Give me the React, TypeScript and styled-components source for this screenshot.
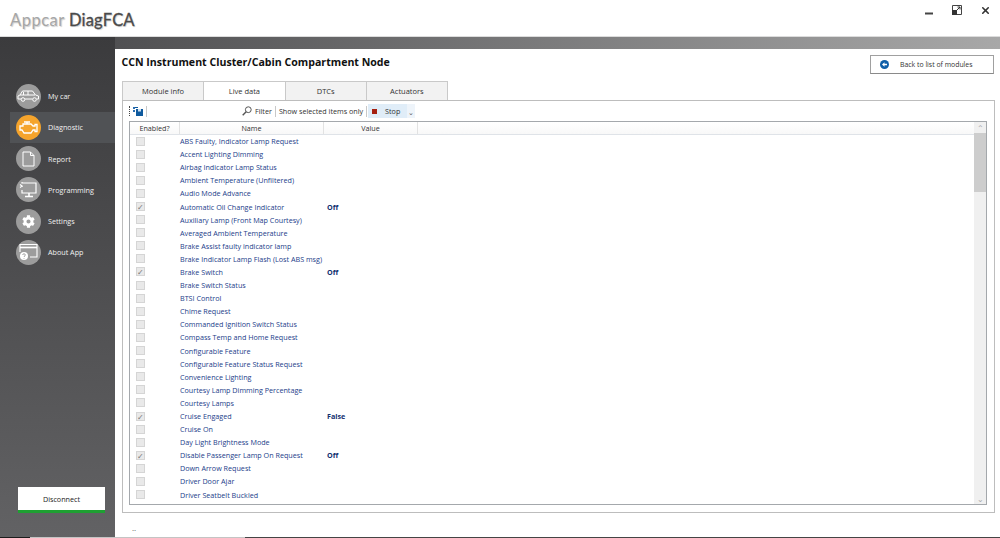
import { createGlobalStyle, styled } from 'styled-components';
import { X } from 'lucide-react';
import { FaCog } from 'react-icons/fa';

const GlobalStyle = createGlobalStyle`
	html, body {
		margin: 0;
		padding: 0;
		background: #fff;
	}
	body {
		font-family: "Open Sans", "Noto Sans", sans-serif;
		width: 1000px;
		height: 538px;
		overflow: hidden;
	}
	* {
		box-sizing: border-box;
	}
`;

type Signal = { name: string; value?: string };

const signals: Signal[] = [
	{ name: 'ABS Faulty, Indicator Lamp Request' },
	{ name: 'Accent Lighting Dimming' },
	{ name: 'Airbag Indicator Lamp Status' },
	{ name: 'Ambient Temperature (Unfiltered)' },
	{ name: 'Audio Mode Advance' },
	{ name: 'Automatic Oil Change Indicator', value: 'Off' },
	{ name: 'Auxiliary Lamp (Front Map Courtesy)' },
	{ name: 'Averaged Ambient Temperature' },
	{ name: 'Brake Assist faulty indicator lamp' },
	{ name: 'Brake Indicator Lamp Flash (Lost ABS msg)' },
	{ name: 'Brake Switch', value: 'Off' },
	{ name: 'Brake Switch Status' },
	{ name: 'BTSI Control' },
	{ name: 'Chime Request' },
	{ name: 'Commanded Ignition Switch Status' },
	{ name: 'Compass Temp and Home Request' },
	{ name: 'Configurable Feature' },
	{ name: 'Configurable Feature Status Request' },
	{ name: 'Convenience Lighting' },
	{ name: 'Courtesy Lamp Dimming Percentage' },
	{ name: 'Courtesy Lamps' },
	{ name: 'Cruise Engaged', value: 'False' },
	{ name: 'Cruise On' },
	{ name: 'Day Light Brightness Mode' },
	{ name: 'Disable Passenger Lamp On Request', value: 'Off' },
	{ name: 'Down Arrow Request' },
	{ name: 'Driver Door Ajar' },
	{ name: 'Driver Seatbelt Buckled' },
];

function CarIcon() {
	return (
		<svg width="23" height="14" viewBox="0 0 23 14" fill="none" stroke="#fff" strokeWidth="1">
			<path d="M1 10V7l2-1 2.500-4h10l3 4 3 1v3h-2M4 10H1M15.500 10H8" />
			<path d="M6.500 3v3M11 2v4M3 6h15" />
			<circle cx="6" cy="10.500" r="1.800" />
			<circle cx="17.500" cy="10.500" r="1.800" />
		</svg>
	);
}

function EngineIcon() {
	return (
		<svg width="19" height="14" viewBox="0 0 19 14" fill="none" stroke="#fff" strokeWidth="1.300">
			<path d="M5 2h6M8 2v2M4 4h8l2 2h2V4.500h2v7h-2V10h-2l-2 3H5l-2-3H1V6h3z" />
		</svg>
	);
}

function ReportIcon() {
	return (
		<svg width="13" height="16" viewBox="0 0 13 16" fill="none" stroke="#fff" strokeWidth="1">
			<path d="M1 1h7.500L12 4.500V15H1z" />
			<path d="M8.500 1v3.500H12" />
		</svg>
	);
}

function MonitorIcon() {
	return (
		<svg width="18" height="17" viewBox="0 0 18 17" fill="none" stroke="#fff" strokeWidth="1.200">
			<path d="M3 1v1H17v10H3V9" />
			<path d="M3 5v1" />
			<path d="M1 3.500 3 5 1 6.500" />
			<path d="M10 12v3M6 15.500h8" strokeWidth="1.600" />
		</svg>
	);
}

function AboutIcon() {
	return (
		<svg width="19" height="18" viewBox="0 0 19 18" fill="none" stroke="#fff" strokeWidth="1.100">
			<path d="M1 9V1.500h17V14H11" />
			<path d="M1 4.500h17" strokeWidth="1.600" />
			<circle cx="5" cy="13" r="4" fill="#fff" stroke="none" />
			<path d="M3.700 12c0-1.700 2.600-1.700 2.600 0 0 1-1.300 1-1.300 2M5 15v.7" stroke="#9a9a9a" strokeWidth="0.900" />
		</svg>
	);
}

function SaveIcon() {
	return (
		<svg width="10" height="10" viewBox="0 0 10 10">
			<path d="M0 1h2v2H0zM0 4h2v2H0z" fill="#2a6db0" />
			<path d="M3 3h7v7H3z" fill="#0f5a9e" />
			<path d="M5 3h3v2.500H5z" fill="#cfe1f2" />
			<path d="M2 1h3v1H2z" fill="#0f5a9e" />
		</svg>
	);
}

function SearchIcon() {
	return (
		<svg width="10" height="10" viewBox="0 0 10 10" fill="none" stroke="#555" strokeWidth="1">
			<circle cx="6.300" cy="3.700" r="2.900" />
			<path d="M4.200 5.800.7 9.300" strokeWidth="1.400" />
		</svg>
	);
}

function BackIcon() {
	return (
		<svg width="9" height="9" viewBox="0 0 9 9">
			<circle cx="4.500" cy="4.500" r="4.500" fill="#0f5fa8" />
			<path d="M2 4.500 4.500 2.300v1.400H7v1.600H4.500v1.400z" fill="#fff" />
		</svg>
	);
}

function MinimizeIcon() {
	return (
		<svg width="10" height="10" viewBox="0 0 10 10">
			<path d="M1 7.500h8v2H1z" fill="#444" />
		</svg>
	);
}

function RestoreIcon() {
	return (
		<svg width="10" height="10" viewBox="0 0 10 10">
			<path d="M.5.500h9v9h-9z" fill="#fff" stroke="#444" />
			<path d="M0 5h5v5H0z" fill="#333" />
			<path d="M5 5 8 2M5.500 2H8v2.500" fill="none" stroke="#333" />
		</svg>
	);
}

const navItems = [
	{ label: 'My car', icon: <CarIcon /> },
	{ label: 'Diagnostic', icon: <EngineIcon />, active: true },
	{ label: 'Report', icon: <ReportIcon /> },
	{ label: 'Programming', icon: <MonitorIcon /> },
	{ label: 'Settings', icon: <FaCog size={13} color="#fff" /> },
	{ label: 'About App', icon: <AboutIcon /> },
];

const tabs = ['Module info', 'Live data', 'DTCs', 'Actuators'];

export default function App() {
	return (
		<>
			<GlobalStyle />
			<Page>
				<TitleBar>
					<Logo><i>Appcar</i> <b>DiagFCA</b></Logo>
					<WindowButtons>
						<MinimizeIcon />
						<RestoreIcon />
						<X size={11} strokeWidth={3.500} color="#333" />
					</WindowButtons>
				</TitleBar>
				<Body>
					<Sidebar>
						<Nav>
							{navItems.map(item => (
								<NavItem key={item.label} $active={item.active}>
									<NavCircle $active={item.active}>{item.icon}</NavCircle>
									{item.label}
								</NavItem>
							))}
						</Nav>
						<DisconnectButton>Disconnect</DisconnectButton>
					</Sidebar>
					<Content>
						<TopStrip />
						<Main>
							<Heading>
								<h1>CCN Instrument Cluster/Cabin Compartment Node</h1>
								<BackButton><BackIcon />Back to list of modules</BackButton>
							</Heading>
							<TabRow>
								{tabs.map(tab => <Tab key={tab} $active={tab === 'Live data'}>{tab}</Tab>)}
							</TabRow>
							<TabPanel>
								<Toolbar>
									<Grip />
									<SaveIcon />
									<ToolSeparator />
									<FilterLabel><SearchIcon />Filter</FilterLabel>
									<ToolSeparator />
									<span>Show selected items only</span>
									<ToolSeparator $tight />
									<StopButton><StopSquare />Stop</StopButton>
									<Overflow>⌄</Overflow>
								</Toolbar>
								<GridBox>
									<GridMain>
										<HeaderRow>
											<HeaderCell>Enabled?</HeaderCell>
											<HeaderCell>Name</HeaderCell>
											<HeaderCell>Value</HeaderCell>
										</HeaderRow>
										{signals.map(signal => (
											<Row key={signal.name}>
												<CheckCell>
													<CheckBox>{signal.value ? '✓' : ''}</CheckBox>
												</CheckCell>
												<NameCell>{signal.name}</NameCell>
												<ValueCell>{signal.value}</ValueCell>
											</Row>
										))}
									</GridMain>
									<ScrollBar>
										<ScrollArrow>⌃</ScrollArrow>
										<ScrollThumb />
										<ScrollArrow $down>⌄</ScrollArrow>
									</ScrollBar>
								</GridBox>
							</TabPanel>
							<Footer>..</Footer>
						</Main>
					</Content>
				</Body>
				<TaskbarEdge />
			</Page>
		</>
	);
}

const Page = styled.div`
	width: 1000px;
	height: 538px;
	display: flex;
	flex-direction: column;
	overflow: hidden;
`;

const TitleBar = styled.div`
	height: 37px;
	flex: none;
	background: #fff;
	border-bottom: 1px solid #dcdcdc;
	display: flex;
	justify-content: space-between;
	padding: 4px 9px 0 10px;
`;

const Logo = styled.div`
	font-family: "Lato", sans-serif;
	font-size: 16.500px;
	line-height: 33px;
	color: #a6a6a6;
	text-shadow: 1px 1px 1px #cfcfcf;
	white-space: pre;

	i {
		font-style: normal;
		letter-spacing: 0.500px;
	}

	b {
		font-weight: 400;
		letter-spacing: 0.200px;
		color: #4a4a4a;
		-webkit-text-stroke: 0.300px #4a4a4a;
	}
`;

const WindowButtons = styled.div`
	display: flex;
	align-items: flex-start;
	gap: 18px;
	padding-top: 1px;
`;

const Body = styled.div`
	flex: 1;
	display: flex;
	min-height: 0;
`;

const TaskbarEdge = styled.div`
	height: 1px;
	flex: none;
	background: linear-gradient(to right, #1c1c1c 30px, #c4c4c4 30px, #c4c4c4 245px, #454545 245px);
`;

const Sidebar = styled.div`
	width: 115px;
	flex: none;
	background: linear-gradient(to bottom, #3b3b3d, #626264);
	padding: 43.700px 0 24px 10px;
	display: flex;
	flex-direction: column;
	justify-content: space-between;
`;

const Nav = styled.div`
	display: flex;
	flex-direction: column;
`;

const NavItem = styled.div<{ $active?: boolean }>`
	height: 31.200px;
	display: flex;
	align-items: center;
	gap: 7.500px;
	padding-left: 5.500px;
	font-size: 7.200px;
	color: #f0f0f0;
	background: ${p => (p.$active ? '#505255' : 'transparent')};
`;

const NavCircle = styled.div<{ $active?: boolean }>`
	width: 25px;
	height: 25px;
	border-radius: 50%;
	flex: none;
	display: flex;
	align-items: center;
	justify-content: center;
	background: ${p => (p.$active ? '#f5a42c' : '#9c9c9c')};
`;

const DisconnectButton = styled.div`
	width: 87px;
	height: 26px;
	margin-left: 8px;
	background: #fff;
	border-bottom: 3px solid #1ea032;
	color: #222;
	font-size: 7.200px;
	display: flex;
	align-items: center;
	justify-content: center;
`;

const Content = styled.div`
	flex: 1;
	min-width: 0;
	display: flex;
	flex-direction: column;
`;

const TopStrip = styled.div`
	height: 12px;
	flex: none;
	background: linear-gradient(to right, #505052, #a8a8a8);
`;

const Main = styled.div`
	flex: 1;
	min-height: 0;
	background: #fff;
	padding: 6px 5px 0 7px;
	display: flex;
	flex-direction: column;
`;

const Heading = styled.div`
	height: 26px;
	flex: none;
	display: flex;
	align-items: flex-start;
	justify-content: space-between;

	h1 {
		margin: 0 0 0 -0.500px;
		font-size: 10.600px;
		line-height: 15px;
		font-weight: 700;
		color: #111;
	}
`;

const BackButton = styled.div`
	width: 124px;
	height: 19px;
	margin-right: 1px;
	border: 1px solid #a0a0a0;
	border-bottom-color: #8a8a8a;
	display: flex;
	align-items: center;
	gap: 11px;
	padding-left: 9px;
	font-size: 6.900px;
	color: #333;
`;

const TabRow = styled.div`
	display: flex;
	height: 19px;
	flex: none;
`;

const Tab = styled.div<{ $active?: boolean }>`
	width: 82.250px;
	border: 1px solid #c9c9c9;
	border-bottom: none;
	margin-left: -1px;
	background: ${p => (p.$active ? '#fff' : '#f2f2f2')};
	display: flex;
	align-items: center;
	justify-content: center;
	font-size: 7.500px;
	color: #333;

	&:first-child {
		margin-left: 0;
	}
`;

const TabPanel = styled.div`
	height: 413px;
	flex: none;
	border: 1px solid #bdbdbd;
	padding: 2px 7px 7px 6px;
	display: flex;
	flex-direction: column;
`;

const Toolbar = styled.div`
	height: 18px;
	flex: none;
	padding-bottom: 2px;
	display: flex;
	align-items: center;
	font-size: 7.200px;
	color: #333;
`;

const Grip = styled.div`
	width: 1px;
	height: 10px;
	margin-right: 3px;
	border-left: 1px dotted #444;
`;

const ToolSeparator = styled.div<{ $tight?: boolean }>`
	width: 1px;
	height: 11px;
	margin: ${p => (p.$tight ? '0 1px 0 3px' : '0 3px')};
	background: #c8c8c8;
`;

const FilterLabel = styled.span`
	display: flex;
	align-items: center;
	gap: 3px;
	margin-left: 92px;
`;

const StopButton = styled.div`
	width: 39px;
	height: 14px;
	background: #e0edf8;
	display: flex;
	align-items: center;
	gap: 8px;
	padding-left: 4px;
`;

const StopSquare = styled.div`
	width: 5px;
	height: 5px;
	background: #a52010;
`;

const Overflow = styled.div`
	width: 8px;
	height: 14px;
	background: #eef4fa;
	font-size: 7px;
	line-height: 18px;
	text-align: center;
	color: #555;
`;

const GridBox = styled.div`
	flex: 1;
	min-height: 0;
	border: 1px solid #a4a8ac;
	display: flex;
	overflow: hidden;
`;

const GridMain = styled.div`
	flex: 1;
	min-width: 0;
	overflow: hidden;
`;

const columns = '50px 144px 94px';

const HeaderRow = styled.div`
	display: grid;
	grid-template-columns: ${columns};
	height: 13px;
	border-bottom: 1px solid #dfe3e8;
	background: linear-gradient(to bottom, #fff, #f8f8f8);
`;

const HeaderCell = styled.div`
	border-right: 1px solid #e2e2e2;
	font-size: 7.200px;
	line-height: 12px;
	color: #333;
	text-align: center;
`;

const Row = styled.div`
	display: grid;
	grid-template-columns: ${columns};
	height: 13.100px;
	align-items: center;
	font-size: 7.200px;

	&:nth-child(2) {
		margin-top: -0.500px;
	}
`;

const CheckCell = styled.div`
	padding-left: 6px;
`;

const CheckBox = styled.div`
	width: 9px;
	height: 9px;
	background: #e9e9e9;
	border: 1px solid #d5d5d5;
	color: #777;
	font-size: 8px;
	line-height: 7px;
	text-align: center;
`;

const NameCell = styled.div`
	color: #23408a;
	white-space: nowrap;
`;

const ValueCell = styled.div`
	padding-left: 3px;
	color: #12306f;
	font-weight: 700;
`;

const ScrollBar = styled.div`
	width: 12px;
	flex: none;
	background: #f0f0f0;
	display: flex;
	flex-direction: column;
`;

const ScrollArrow = styled.div<{ $down?: boolean }>`
	height: 11px;
	flex: none;
	margin-top: ${p => (p.$down ? 'auto' : '0')};
	font-size: 8px;
	line-height: 11px;
	text-align: center;
	color: #aaa;
`;

const ScrollThumb = styled.div`
	height: 59px;
	background: #cdcdcd;
`;

const Footer = styled.div`
	padding: 10px 0 0 10px;
	font-size: 8px;
	line-height: 10px;
	color: #555;
`;
